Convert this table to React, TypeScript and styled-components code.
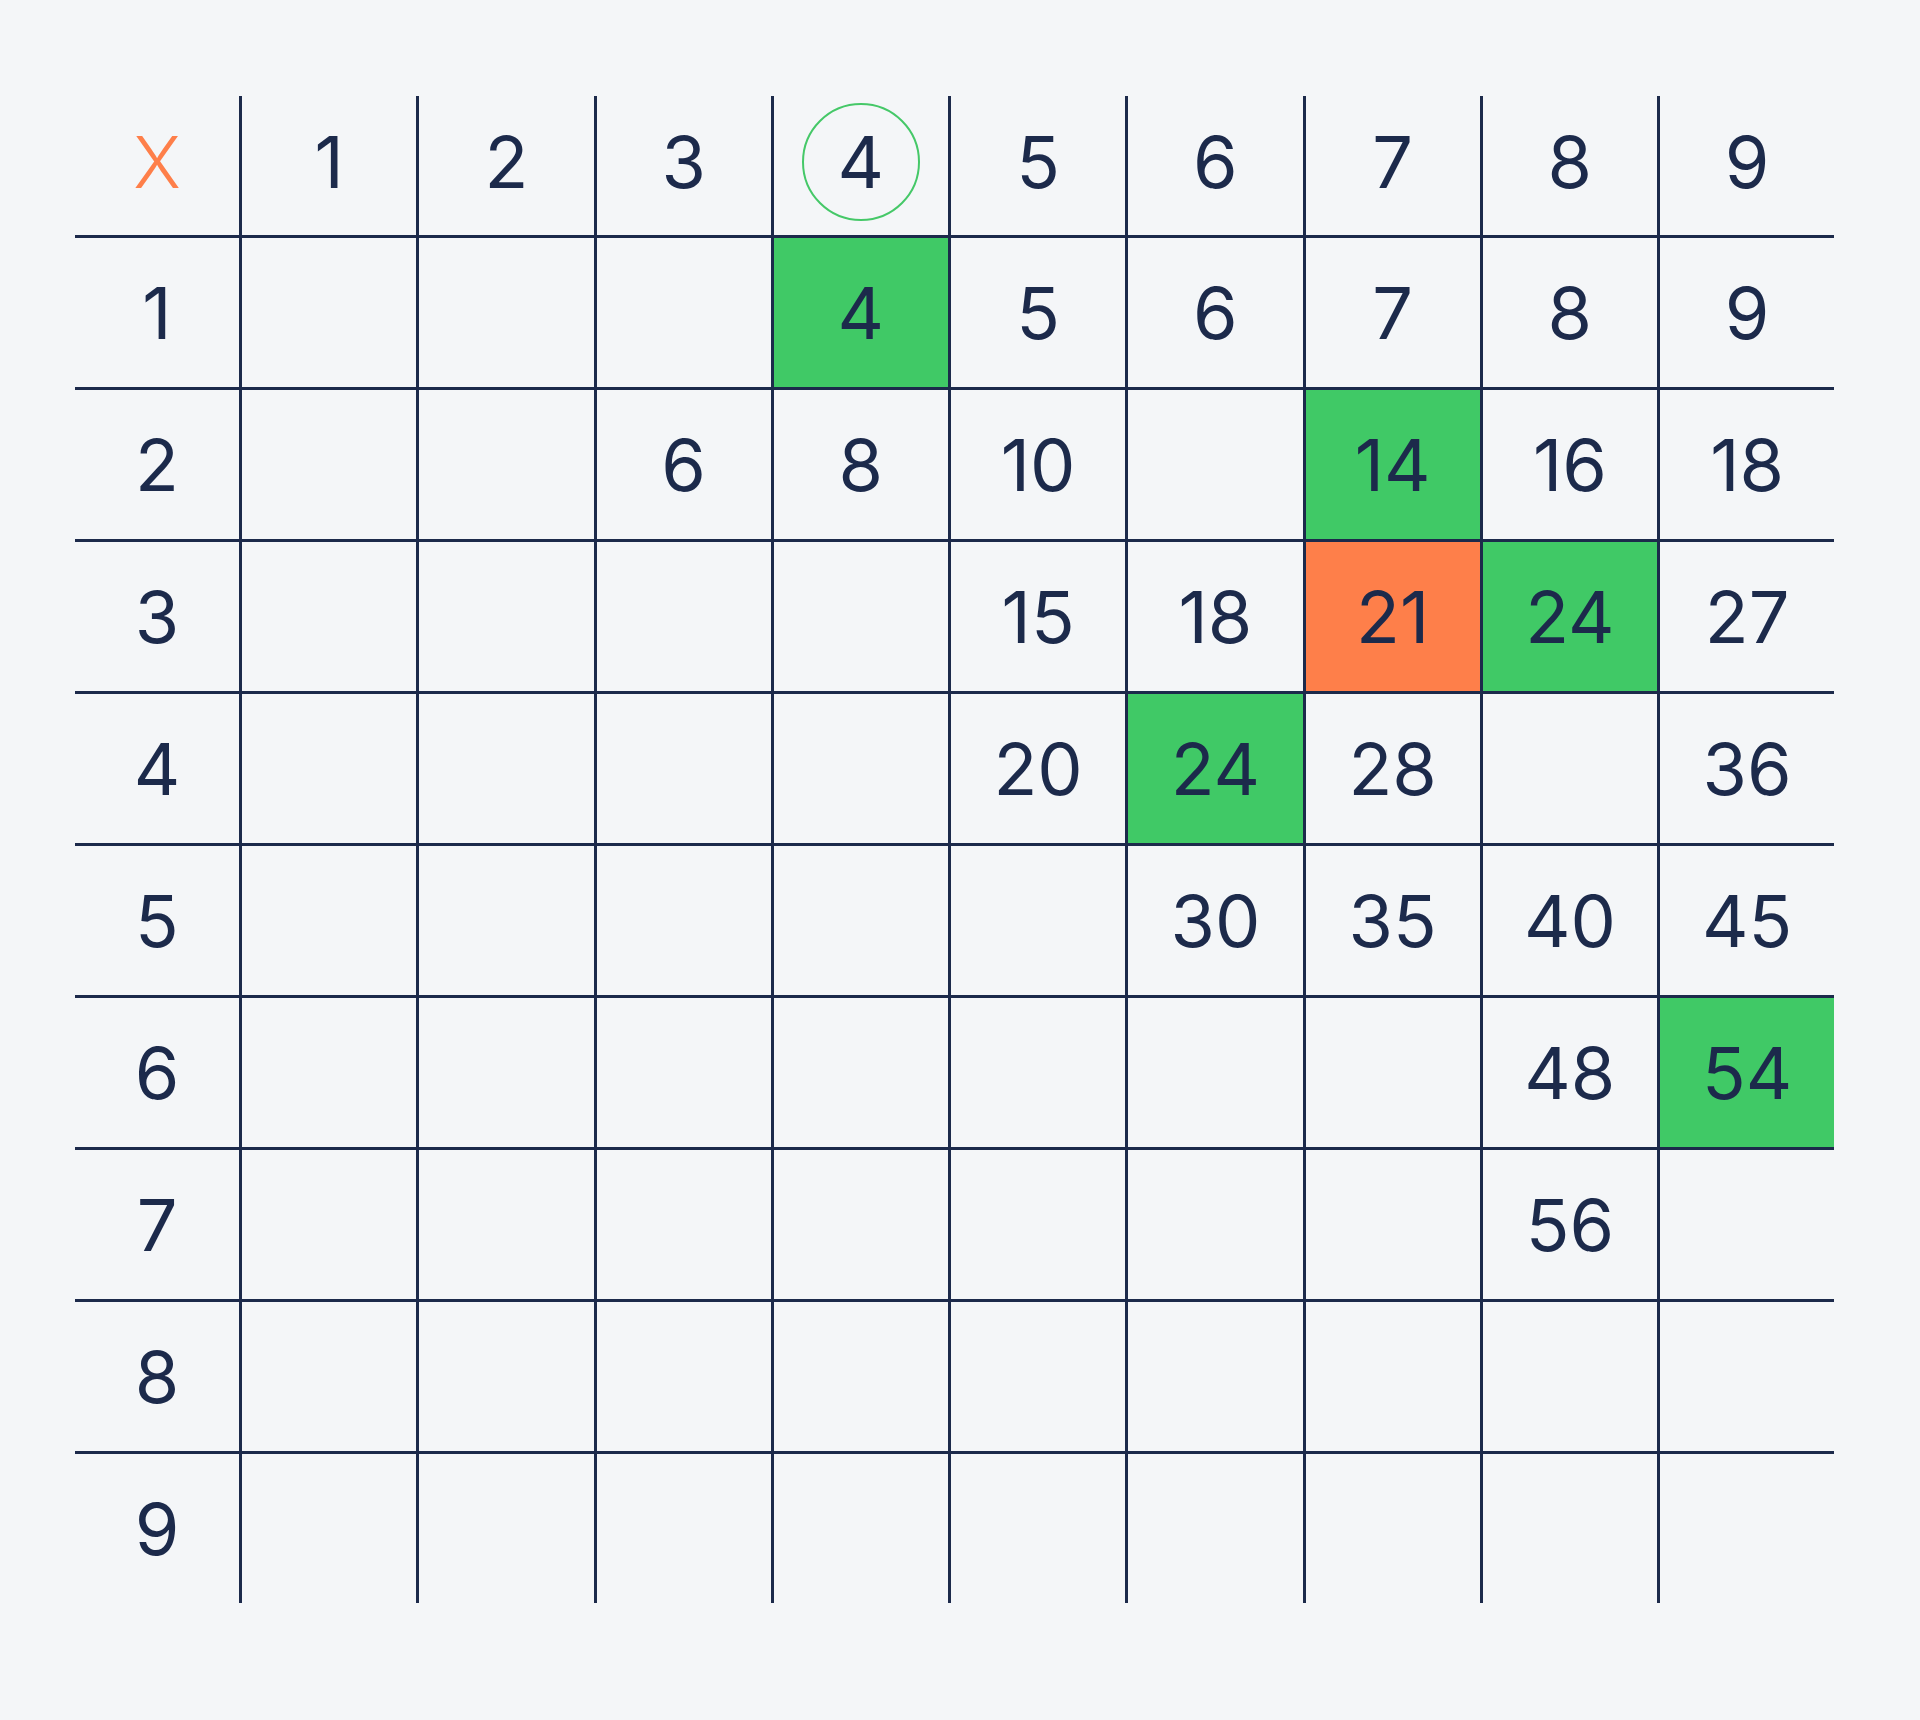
import React from 'react';
import styled, { createGlobalStyle } from 'styled-components';

const GlobalStyle = createGlobalStyle`
  html, body {
    margin: 0;
    padding: 0;
    background: #f4f6f8;
  }
  body {
    font-family: Inter, "Liberation Sans", sans-serif;
  }
`;

const colors = {
  ink: '#1c2a4b',
  green: '#40c966',
  orange: '#fe7f4a',
  ring: '#45c868',
};

type Fill = 'green' | 'orange' | undefined;

const Page = styled.div`
  width: 1920px;
  height: 1720px;
  box-sizing: border-box;
  padding: 96px 0 0 75px;
`;

const Table = styled.div`
  display: grid;
  grid-template-columns: 164px repeat(9, 177.25px);
  grid-template-rows: 139px repeat(9, 152px);
`;

const Cell = styled.div<{ $col: number; $row: number; $fill?: Fill }>`
  box-sizing: border-box;
  display: flex;
  align-items: center;
  justify-content: center;
  border-left: ${p => (p.$col > 0 ? `3px solid ${colors.ink}` : 'none')};
  border-top: ${p => (p.$row > 0 ? `3px solid ${colors.ink}` : 'none')};
  padding-bottom: ${p => (p.$row === 0 ? '8px' : '0')};
  background: ${p => (p.$fill ? colors[p.$fill] : 'transparent')};
  color: ${colors.ink};
  font-size: 72px;
  font-weight: 400;
  line-height: 1;
  position: relative;
`;

const Times = styled.span`
  color: ${colors.orange};
  font-weight: 300;
`;

const Ring = styled.span`
  display: flex;
  align-items: center;
  justify-content: center;
  width: 118px;
  height: 118px;
  box-sizing: border-box;
  border: 2.5px solid ${colors.ring};
  border-radius: 50%;
`;

// products shown in the table, keyed "row-col"
const products: Record<string, { v: number; fill?: Fill }> = {
  '1-4': { v: 4, fill: 'green' },
  '1-5': { v: 5 },
  '1-6': { v: 6 },
  '1-7': { v: 7 },
  '1-8': { v: 8 },
  '1-9': { v: 9 },
  '2-3': { v: 6 },
  '2-4': { v: 8 },
  '2-5': { v: 10 },
  '2-7': { v: 14, fill: 'green' },
  '2-8': { v: 16 },
  '2-9': { v: 18 },
  '3-5': { v: 15 },
  '3-6': { v: 18 },
  '3-7': { v: 21, fill: 'orange' },
  '3-8': { v: 24, fill: 'green' },
  '3-9': { v: 27 },
  '4-5': { v: 20 },
  '4-6': { v: 24, fill: 'green' },
  '4-7': { v: 28 },
  '4-9': { v: 36 },
  '5-6': { v: 30 },
  '5-7': { v: 35 },
  '5-8': { v: 40 },
  '5-9': { v: 45 },
  '6-8': { v: 48 },
  '6-9': { v: 54, fill: 'green' },
  '7-8': { v: 56 },
};

const range = [0, 1, 2, 3, 4, 5, 6, 7, 8, 9];

export default function App() {
  const renderCell = (row: number, col: number) => {
    if (row === 0 && col === 0) {
      return (
        <Cell key="x" $row={0} $col={0}>
          <Times>X</Times>
        </Cell>
      );
    }
    if (row === 0) {
      return (
        <Cell key={`h-${col}`} $row={0} $col={col}>
          {col === 4 ? <Ring>{col}</Ring> : col}
        </Cell>
      );
    }
    if (col === 0) {
      return (
        <Cell key={`r-${row}`} $row={row} $col={0}>
          {row}
        </Cell>
      );
    }
    const p = products[`${row}-${col}`];
    return (
      <Cell key={`${row}-${col}`} $row={row} $col={col} $fill={p?.fill}>
        {p ? p.v : null}
      </Cell>
    );
  };

  return (
    <>
      <GlobalStyle />
      <Page>
        <Table>{range.map(r => range.map(c => renderCell(r, c)))}</Table>
      </Page>
    </>
  );
}
